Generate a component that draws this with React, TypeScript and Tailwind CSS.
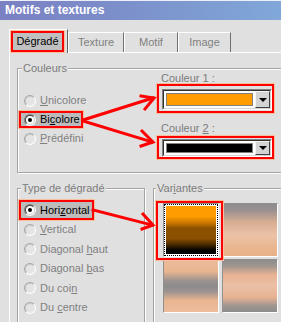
import React from "react";

function Radio({ checked }: { checked?: boolean }) {
  if (checked) {
    return (
      <div className="w-[12px] h-[12px] shrink-0 rounded-full border border-t-[#808080] border-l-[#808080] border-b-white border-r-white">
        <div className="w-full h-full rounded-full border border-t-[#404040] border-l-[#404040] border-b-[#d4d4d4] border-r-[#d4d4d4] bg-white flex items-center justify-center">
          <div className="w-[4px] h-[4px] rounded-full bg-black" />
        </div>
      </div>
    );
  }
  return (
    <div className="w-[12px] h-[12px] shrink-0 rounded-full border border-t-[#a8a8a8] border-l-[#a8a8a8] border-b-white border-r-white">
      <div className="w-full h-full rounded-full border border-t-[#c4c4c4] border-l-[#c4c4c4] border-b-[#ececec] border-r-[#ececec] bg-[#e4e4e4]" />
    </div>
  );
}

function U({ children }: { children: React.ReactNode }) {
  return <span className="underline underline-offset-[1px]">{children}</span>;
}

function Combo({ color, h }: { color: string; h: string }) {
  return (
    <div className={`w-[110px] ${h} border border-t-[#808080] border-l-[#808080] border-b-white border-r-white`}>
      <div className="h-full flex border border-t-[#303030] border-l-[#303030] border-b-[#d4d4d4] border-r-[#d4d4d4] bg-white">
        <div className="flex-1 p-[2px]">
          <div className={`h-full border border-[#808080] ${color}`} />
        </div>
        <div className="w-[15px] h-full bg-[#d4d4d4] border border-t-[#f4f4f4] border-l-[#f4f4f4] border-b-[#404040] border-r-[#404040] flex items-center justify-center">
          <div className="w-0 h-0 border-l-[4px] border-r-[4px] border-t-[4px] border-l-transparent border-r-transparent border-t-black" />
        </div>
      </div>
    </div>
  );
}

const groupBox =
  "shrink-0 border border-[#a4a4a4] shadow-[inset_1px_1px_0_#ffffff,1px_1px_0_#ffffff]";
const groupLabel =
  "-mt-[7px] -mb-[6px] w-fit px-[1px] h-[13px] leading-[13px] bg-[#e0e0e0] text-[#7c7c7c]";
const redBox = "border-2 border-[#ff0000] shadow-[0_0_0_1px_#f6c09c]";

export default function App() {
  return (
    <div className="relative w-[281px] h-[322px] overflow-hidden bg-[#e0e0e0] font-['Liberation_Sans',Arial,sans-serif] text-[11px] leading-[13px] text-[#808080]">
      <div className="h-[1px] bg-[#eeeef6]" />
      <div className="h-[19px] flex items-center pl-[5px] bg-gradient-to-r from-[#7a80c2] via-[#7c92cc] to-[#80a8d8] text-white font-bold text-[12px]">
        Motifs et textures
      </div>

      <div className="pl-[9px] pt-[9px]">
        {/* Tabs */}
        <div className="flex items-end h-[23px]">
          <div className="relative z-10 -mb-[1px] w-[59px] h-[24px] bg-[#e0e0e0] border-t border-l border-white border-r border-r-[#606060]">
            <div className={`ml-[1px] mt-[1px] w-[53px] h-[21px] ${redBox} bg-[#c0c0c0] flex items-center justify-center text-black`}>
              Dégradé
            </div>
          </div>
          <div className="w-[56px] h-[20px] border-t border-l border-white border-r border-r-[#707070] flex items-center justify-center">
            Texture
          </div>
          <div className="w-[54px] h-[20px] border-t border-l border-white border-r border-r-[#707070] flex items-center justify-center">
            Motif
          </div>
          <div className="w-[53px] h-[20px] border-t border-l border-white border-r border-r-[#707070] flex items-center justify-center">
            Image
          </div>
        </div>

        {/* Panel */}
        <div className="w-[290px] h-[300px] border-t border-l border-white">
          {/* Couleurs */}
          <div className={`ml-[7px] mt-[15px] w-[290px] h-[105px] ${groupBox}`}>
            <div className={`${groupLabel} ml-[4px]`}>Couleurs</div>
            <div className="flex">
              <div className="w-[139px] shrink-0 pt-[22px]">
                <div className="h-[19px] flex items-center pl-[6px] gap-[4px]">
                  <Radio />
                  <span>
                    <U>U</U>nicolore
                  </span>
                </div>
                <div className="h-[19px] flex items-center">
                  <div className={`ml-[1px] h-[17px] w-fit ${redBox} bg-[#bcbcbc] flex items-center pl-[3px] pr-[1px] gap-[4px] text-black`}>
                    <Radio checked />
                    <span>
                      Bi<U>c</U>olore
                    </span>
                  </div>
                </div>
                <div className="h-[19px] flex items-center pl-[6px] gap-[4px]">
                  <Radio />
                  <span>
                    <U>P</U>rédéfini
                  </span>
                </div>
              </div>
              <div className="flex flex-col">
                <div className="mt-[3px] h-[12px] leading-[12px] pl-[4px] text-[#7c7c7c]">Couleur 1 :</div>
                <div className={`w-[117px] h-[29px] ${redBox} pl-[3px] pt-[3px]`}>
                  <Combo color="bg-[#ff9c00]" h="h-[21px]" />
                </div>
                <div className="mt-[9px] h-[12px] leading-[12px] pl-[4px] text-[#7c7c7c]">
                  Couleur <U>2</U> :
                </div>
                <div className={`mt-[2px] w-[117px] h-[23px] ${redBox} pl-[3px] pt-[1px]`}>
                  <Combo color="bg-black" h="h-[18px]" />
                </div>
              </div>
            </div>
          </div>

          {/* Bottom row */}
          <div className="flex mt-[15px]">
            <div className={`ml-[7px] w-[128px] h-[150px] ${groupBox}`}>
              <div className={`${groupLabel} ml-[3px]`}>Type de dégradé</div>
              <div className="pt-[11px]">
                <div className="h-[20px] flex items-center">
                  <div className={`ml-[1px] h-[20px] w-fit ${redBox} bg-[#bcbcbc] flex items-center pl-[3px] pr-[2px] gap-[4px] text-black`}>
                    <Radio checked />
                    <span>
                      Hori<U>z</U>ontal
                    </span>
                  </div>
                </div>
                <div className="h-[19px] flex items-center pl-[6px] gap-[4px]">
                  <Radio />
                  <span>
                    <U>V</U>ertical
                  </span>
                </div>
                <div className="h-[20px] flex items-center pl-[6px] gap-[4px]">
                  <Radio />
                  <span>
                    Diagonal <U>h</U>aut
                  </span>
                </div>
                <div className="h-[19px] flex items-center pl-[6px] gap-[4px]">
                  <Radio />
                  <span>
                    Diagonal <U>b</U>as
                  </span>
                </div>
                <div className="h-[20px] flex items-center pl-[6px] gap-[4px]">
                  <Radio />
                  <span>
                    Du coi<U>n</U>
                  </span>
                </div>
                <div className="h-[19px] flex items-center pl-[6px] gap-[4px]">
                  <Radio />
                  <span>
                    Du <U>c</U>entre
                  </span>
                </div>
              </div>
            </div>

            <div className={`ml-[8px] w-[150px] h-[150px] ${groupBox}`}>
              <div className={`${groupLabel} ml-[2px]`}>
                Var<U>i</U>antes
              </div>
              <div className="ml-[9px] mt-[14px] grid grid-cols-[56px_56px] grid-rows-[54px_54px] gap-x-[3px] gap-y-[2px]">
                <div className="relative border border-t-[#909090] border-l-[#909090] border-b-white border-r-white">
                  <div className={`absolute -left-[8px] -top-[3px] w-[67px] h-[59px] ${redBox}`} />
                  <div className="h-full border border-dotted border-black bg-white p-[1px]">
                    <div className="h-full bg-[linear-gradient(to_bottom,#ff9c00_0%,#ff9c00_22%,#c87400_36%,#8c5200_46%,#8a5000_68%,#402400_82%,#000000_92%,#000000_100%)]" />
                  </div>
                </div>
                <div className="border border-t-[#909090] border-l-[#909090] border-b-white border-r-white bg-[linear-gradient(to_bottom,#8c8c8c_0%,#9a9090_12%,#d8ae92_35%,#ecc2a8_60%,#eab58e_85%,#e9b189_100%)]" />
                <div className="border border-t-[#909090] border-l-[#909090] border-b-white border-r-white bg-[linear-gradient(to_bottom,#ecbc9c_0%,#e9b590_22%,#9a9290_40%,#8c8c8c_50%,#9a9290_60%,#e9b590_78%,#ecbc9c_100%)]" />
                <div className="border border-t-[#909090] border-l-[#909090] border-b-white border-r-white bg-[linear-gradient(to_bottom,#8c8c8c_0%,#a09690_12%,#e6b292_28%,#ecc0a6_50%,#e6b292_72%,#a09690_88%,#8c8c8c_100%)]" />
              </div>
            </div>
          </div>
        </div>
      </div>

      {/* Annotation arrows */}
      <svg className="absolute inset-0 pointer-events-none" width="281" height="322" viewBox="0 0 281 322">
        <g stroke="#ff0000" strokeWidth="3" fill="none" strokeLinecap="square">
          <line x1="83" y1="120" x2="153" y2="98" />
          <polyline points="141,96 154,98 145,109" />
          <line x1="83" y1="121" x2="152" y2="142" />
          <polyline points="142,131 153,142 141,146" />
          <line x1="93" y1="210" x2="152" y2="225" />
          <polyline points="143,214 153,225 142,229" />
        </g>
      </svg>
    </div>
  );
}
